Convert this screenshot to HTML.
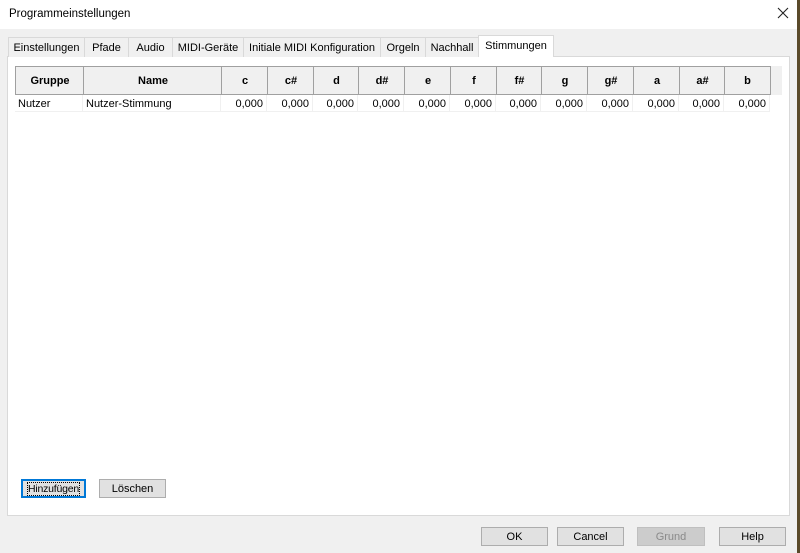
<!DOCTYPE html><html><head><style>
*{box-sizing:border-box;margin:0;padding:0}
body{width:800px;height:553px;background:#f0f0f0;font-family:"Liberation Sans",sans-serif;font-size:11px;color:#000;position:relative;overflow:hidden}
.abs{position:absolute}
.title{left:0;top:0;width:797px;height:29px;background:#fff}
.tab{position:absolute;top:37px;height:20px;border:1px solid #d9d9d9;border-bottom:none;background:#f0f0f0;text-align:center;line-height:20px;font-size:11px;white-space:nowrap}
.panel{left:7px;top:56px;width:783px;height:460px;background:#fff;border:1px solid #d9d9d9}
.hd{position:absolute;top:66px;height:29px;background:#f0f0f0;border-top:1px solid #a0a0a0;border-bottom:1px solid #a0a0a0;border-left:1px solid #a0a0a0;font-weight:bold;text-align:center;line-height:29px}
.cell{position:absolute;top:95px;height:17px;line-height:19px;border-right:1px solid #f0f0f0;border-bottom:1px solid #f0f0f0;padding:0 3px}
.btn{position:absolute;height:19px;background:#e1e1e1;border:1px solid #adadad;text-align:center;line-height:19px;white-space:nowrap}
</style></head><body>
<div class="abs title"></div>
<div class="abs" style="left:9px;top:8px;font-size:11.5px">Programmeinstellungen</div>
<svg class="abs" style="left:777px;top:7px" width="12" height="12"><path d="M1 1L11 11M11 1L1 11" stroke="#222" stroke-width="1.1"/></svg>
<div class="abs" style="left:797px;top:0;width:3px;height:553px;background:#5a4a2a"></div>
<div class="abs panel"></div>
<div class="tab" style="left:8px;width:77px">Einstellungen</div>
<div class="tab" style="left:84px;width:45px">Pfade</div>
<div class="tab" style="left:128px;width:45px">Audio</div>
<div class="tab" style="left:172px;width:72px">MIDI-Geräte</div>
<div class="tab" style="left:243px;width:138px">Initiale MIDI Konfiguration</div>
<div class="tab" style="left:380px;width:46px">Orgeln</div>
<div class="tab" style="left:425px;width:54px">Nachhall</div>
<div class="tab" style="left:478px;top:35px;height:22px;width:76px;background:#fff;line-height:20px">Stimmungen</div>
<div class="abs" style="left:15px;top:66px;width:767px;height:29px;background:#f0f0f0"></div>
<div class="hd" style="left:15px;width:69px">Gruppe</div>
<div class="hd" style="left:83px;width:139px">Name</div>
<div class="hd" style="left:221px;width:47px">c</div>
<div class="hd" style="left:267px;width:47px">c#</div>
<div class="hd" style="left:313px;width:46px">d</div>
<div class="hd" style="left:358px;width:47px">d#</div>
<div class="hd" style="left:404px;width:47px">e</div>
<div class="hd" style="left:450px;width:47px">f</div>
<div class="hd" style="left:496px;width:46px">f#</div>
<div class="hd" style="left:541px;width:47px">g</div>
<div class="hd" style="left:587px;width:47px">g#</div>
<div class="hd" style="left:633px;width:47px">a</div>
<div class="hd" style="left:679px;width:46px">a#</div>
<div class="hd" style="left:724px;width:47px;border-right:1px solid #a0a0a0">b</div>
<div class="cell" style="left:15px;width:68px">Nutzer</div>
<div class="cell" style="left:83px;width:138px">Nutzer-Stimmung</div>
<div class="cell" style="left:221px;width:46px;text-align:right">0,000</div>
<div class="cell" style="left:267px;width:46px;text-align:right">0,000</div>
<div class="cell" style="left:313px;width:45px;text-align:right">0,000</div>
<div class="cell" style="left:358px;width:46px;text-align:right">0,000</div>
<div class="cell" style="left:404px;width:46px;text-align:right">0,000</div>
<div class="cell" style="left:450px;width:46px;text-align:right">0,000</div>
<div class="cell" style="left:496px;width:45px;text-align:right">0,000</div>
<div class="cell" style="left:541px;width:46px;text-align:right">0,000</div>
<div class="cell" style="left:587px;width:46px;text-align:right">0,000</div>
<div class="cell" style="left:633px;width:46px;text-align:right">0,000</div>
<div class="cell" style="left:679px;width:45px;text-align:right">0,000</div>
<div class="cell" style="left:724px;width:46px;text-align:right">0,000</div>
<div class="btn" style="left:21px;top:479px;width:65px;border:2px solid #0078d7;line-height:17px;font-size:10.5px;letter-spacing:-0.2px"><span style="outline:1px dotted #000">Hinzufügen</span></div>
<div class="btn" style="left:99px;top:479px;width:67px">Löschen</div>
<div class="btn" style="left:481px;top:527px;width:67px">OK</div>
<div class="btn" style="left:557px;top:527px;width:67px">Cancel</div>
<div class="btn" style="left:637px;top:527px;width:68px;background:#cccccc;border-color:#bfbfbf;color:#8a8a8a">Grund</div>
<div class="btn" style="left:719px;top:527px;width:67px">Help</div>
</body></html>
